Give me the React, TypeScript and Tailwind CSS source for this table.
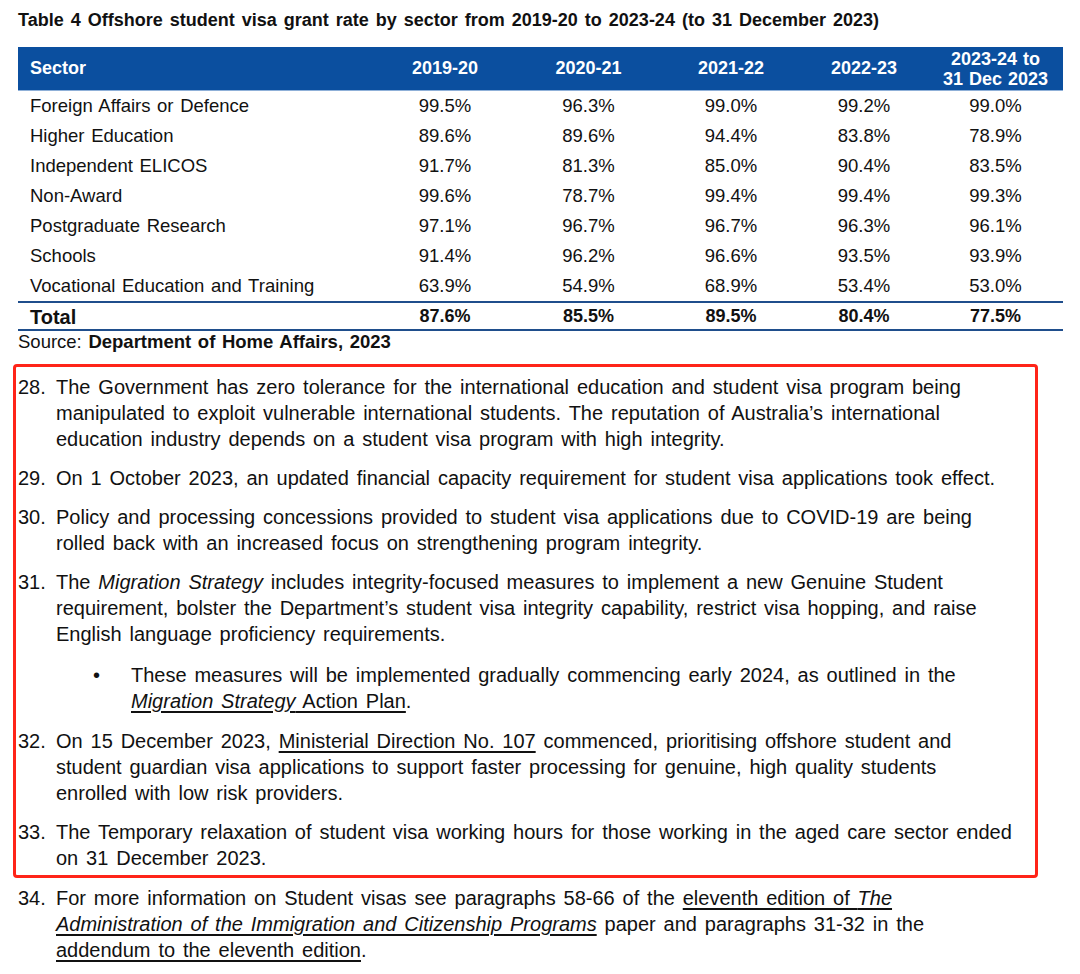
import React from "react";

const rows: [string, string, string, string, string, string][] = [
  ["Foreign Affairs or Defence", "99.5%", "96.3%", "99.0%", "99.2%", "99.0%"],
  ["Higher Education", "89.6%", "89.6%", "94.4%", "83.8%", "78.9%"],
  ["Independent ELICOS", "91.7%", "81.3%", "85.0%", "90.4%", "83.5%"],
  ["Non-Award", "99.6%", "78.7%", "99.4%", "99.4%", "99.3%"],
  ["Postgraduate Research", "97.1%", "96.7%", "96.7%", "96.3%", "96.1%"],
  ["Schools", "91.4%", "96.2%", "96.6%", "93.5%", "93.9%"],
  ["Vocational Education and Training", "63.9%", "54.9%", "68.9%", "53.4%", "53.0%"],
];

const grid = "grid grid-cols-[357px_140px_147px_138px_128px_135px]";

function Para({ n, children, mb = "mb-[13px]" }: { n: string; children: React.ReactNode; mb?: string }) {
  return (
    <div className={`flex ${mb}`}>
      <div className="w-[38px] shrink-0 [word-spacing:0px]">{n}</div>
      <div className="flex-1">{children}</div>
    </div>
  );
}

export default function App() {
  return (
    <div
      className="w-[1080px] h-[974px] bg-white text-[#111] pl-[18px] overflow-hidden"
      style={{ fontFamily: '"Liberation Sans", Arial, sans-serif' }}
    >
      <div className="pt-[9px] h-[47px] text-[18px] font-bold leading-[22px] [word-spacing:2px]">
        Table 4 Offshore student visa grant rate by sector from 2019-20 to 2023-24 (to 31 December 2023)
      </div>
      <div className="w-[1045px]">
        <div className={`${grid} h-[44px] bg-[#0b4f9f] text-white font-bold text-[18px] items-center border-b border-[#8fb0d8]`}>
          <div className="pl-[12px]">Sector</div>
          <div className="text-center">2019-20</div>
          <div className="text-center">2020-21</div>
          <div className="text-center">2021-22</div>
          <div className="text-center">2022-23</div>
          <div className="text-center leading-[20px] [word-spacing:1px]">
            2023-24 to
            <br />
            31 Dec 2023
          </div>
        </div>
        {rows.map((r) => (
          <div key={r[0]} className={`${grid} h-[30px] items-center text-[18.5px] [word-spacing:1.5px]`}>
            <div className="pl-[12px]">{r[0]}</div>
            {r.slice(1).map((v, i) => (
              <div key={i} className="text-center">
                {v}
              </div>
            ))}
          </div>
        ))}
        <div className={`${grid} h-[30px] items-center border-y-2 border-[#1f4e8c] font-bold`}>
          <div className="pl-[12px] text-[20px] leading-[24px]">Total</div>
          {["87.6%", "85.5%", "89.5%", "80.4%", "77.5%"].map((v) => (
            <div key={v} className="text-center text-[18px]">
              {v}
            </div>
          ))}
        </div>
      </div>
      <div className="text-[18.5px] leading-[22px] [word-spacing:1.5px]">
        Source: <span className="font-bold">Department of Home Affairs, 2023</span>
      </div>

      <div className="text-[20px] leading-[26px] mt-[11px] [word-spacing:2.3px]">
        <div className="-ml-[5px] w-[1025px] border-[3px] border-[#ff2418] rounded-[4px] pl-[2px] pt-[7px] pb-[4px]">
          <Para n="28.">
            The Government has zero tolerance for the international education and student visa program being
            <br />
            manipulated to exploit vulnerable international students. The reputation of Australia’s international
            <br />
            education industry depends on a student visa program with high integrity.
          </Para>
          <Para n="29.">
            On 1 October 2023, an updated financial capacity requirement for student visa applications took effect.
          </Para>
          <Para n="30.">
            Policy and processing concessions provided to student visa applications due to COVID-19 are being
            <br />
            rolled back with an increased focus on strengthening program integrity.
          </Para>
          <Para n="31." mb="mb-[15px]">
            The <i>Migration Strategy</i> includes integrity-focused measures to implement a new Genuine Student
            <br />
            requirement, bolster the Department’s student visa integrity capability, restrict visa hopping, and raise
            <br />
            English language proficiency requirements.
          </Para>
          <div className="flex mb-[14px] pl-[38px]">
            <div className="w-[75px] shrink-0 pl-[37px]">•</div>
            <div>
              These measures will be implemented gradually commencing early 2024, as outlined in the
              <br />
              <span className="underline underline-offset-[3px]">
                <i>Migration Strategy</i> Action Plan
              </span>
              .
            </div>
          </div>
          <Para n="32.">
            On 15 December 2023, <span className="underline underline-offset-[3px]">Ministerial Direction No. 107</span>{" "}
            commenced, prioritising offshore student and
            <br />
            student guardian visa applications to support faster processing for genuine, high quality students
            <br />
            enrolled with low risk providers.
          </Para>
          <Para n="33." mb="">
            The Temporary relaxation of student visa working hours for those working in the aged care sector ended
            <br />
            on 31 December 2023.
          </Para>
        </div>
        <div className="pt-[7px]">
          <Para n="34." mb="">
            For more information on Student visas see paragraphs 58-66 of the{" "}
            <span className="underline underline-offset-[3px]">
              eleventh edition of <i>The</i>
            </span>
            <br />
            <span className="underline underline-offset-[3px]">
              <i>Administration of the Immigration and Citizenship Programs</i>
            </span>{" "}
            paper and paragraphs 31-32 in the
            <br />
            <span className="underline underline-offset-[3px]">addendum to the eleventh edition</span>.
          </Para>
        </div>
      </div>
    </div>
  );
}
